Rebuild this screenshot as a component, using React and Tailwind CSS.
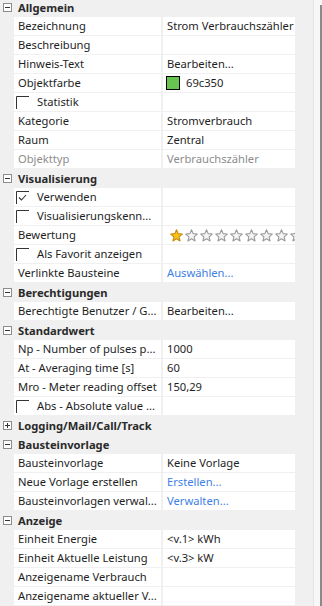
import React from "react";

const font = { fontFamily: '"Noto Sans", "Open Sans", sans-serif' };

const sections = [
  {
    title: "Allgemein",
    open: true,
    rows: [
      { name: "Bezeichnung", value: "Strom Verbrauchszähler" },
      { name: "Beschreibung", value: "" },
      { name: "Hinweis-Text", value: "Bearbeiten..." },
      { name: "Objektfarbe", value: "69c350", swatch: "#69c350" },
      { name: "Statistik", check: false },
      { name: "Kategorie", value: "Stromverbrauch" },
      { name: "Raum", value: "Zentral" },
      { name: "Objekttyp", value: "Verbrauchszähler", muted: true },
    ],
  },
  {
    title: "Visualisierung",
    open: true,
    rows: [
      { name: "Verwenden", check: true },
      { name: "Visualisierungskenn...", check: false },
      { name: "Bewertung", stars: 1 },
      { name: "Als Favorit anzeigen", check: false },
      { name: "Verlinkte Bausteine", value: "Auswählen...", link: true },
    ],
  },
  {
    title: "Berechtigungen",
    open: true,
    rows: [{ name: "Berechtigte Benutzer / G...", value: "Bearbeiten..." }],
  },
  {
    title: "Standardwert",
    open: true,
    rows: [
      { name: "Np - Number of pulses p...", value: "1000" },
      { name: "At - Averaging time [s]", value: "60" },
      { name: "Mro - Meter reading offset", value: "150,29" },
      { name: "Abs - Absolute value ...", check: false },
    ],
  },
  { title: "Logging/Mail/Call/Track", open: false, rows: [] },
  {
    title: "Bausteinvorlage",
    open: true,
    rows: [
      { name: "Bausteinvorlage", value: "Keine Vorlage" },
      { name: "Neue Vorlage erstellen", value: "Erstellen...", link: true },
      { name: "Bausteinvorlagen verwal...", value: "Verwalten...", link: true },
    ],
  },
  {
    title: "Anzeige",
    open: true,
    rows: [
      { name: "Einheit Energie", value: "<v.1> kWh" },
      { name: "Einheit Aktuelle Leistung", value: "<v.3> kW" },
      { name: "Anzeigename Verbrauch", value: "" },
      { name: "Anzeigename aktueller V...", value: "" },
    ],
  },
];

const ToggleBox = ({ open }) => (
  <svg width="9" height="9" viewBox="0 0 9 9" className="shrink-0">
    <rect x="0.5" y="0.5" width="8" height="8" fill="#fff" stroke="#8c8c8c" />
    <line x1="2" y1="4.5" x2="7" y2="4.5" stroke="#333" />
    {!open && <line x1="4.5" y1="2" x2="4.5" y2="7" stroke="#333" />}
  </svg>
);

const CheckBox = ({ checked }) => (
  <svg width="13" height="13" viewBox="0 0 13 13" className="shrink-0">
    <path d="M0.5 13 V0.5 H13" fill="none" stroke="#333" />
    {checked && <path d="M3 6.5 L5.5 9 L10 4" fill="none" stroke="#333" strokeWidth="1.1" />}
  </svg>
);

const Star = ({ filled }) => (
  <svg width="13" height="13" viewBox="0 0 24 24" className="shrink-0">
    <path
      d="M12 1.5 L15 8.6 L22.7 9.3 L16.8 14.4 L18.6 22 L12 18 L5.4 22 L7.2 14.4 L1.3 9.3 L9 8.6 Z"
      fill={filled ? "#f7c21a" : "#f4f4f4"}
      stroke={filled ? "#c98a10" : "#9a9a9a"}
      strokeWidth="2"
      strokeLinejoin="round"
    />
  </svg>
);

const Row = ({ row }) => (
  <div className="flex h-[19px] pb-px">
    <div className="ml-[14px] flex w-[147px] items-center overflow-hidden whitespace-nowrap bg-white">
      {row.check !== undefined ? (
        <>
          <span className="ml-[2px]"><CheckBox checked={row.check} /></span>
          <span className="ml-[8px] text-[#1e1e1e]">{row.name}</span>
        </>
      ) : (
        <span className={`ml-[4px] ${row.muted ? "text-[#8d8d8d]" : "text-[#1e1e1e]"}`}>{row.name}</span>
      )}
    </div>
    <div className="ml-[2px] flex w-[132px] items-center overflow-hidden whitespace-nowrap bg-white">
      {row.stars !== undefined ? (
        <div className="ml-[7px] flex gap-[2px]">
          {Array.from({ length: 10 }).map((_, i) => (
            <Star key={i} filled={i < row.stars} />
          ))}
        </div>
      ) : row.swatch ? (
        <>
          <span className="ml-[3px] h-[14px] w-[14px] border border-black bg-[#69c350]" />
          <span className="ml-[6px] text-[#1e1e1e]">{row.value}</span>
        </>
      ) : (
        <span
          className={`ml-[4px] ${
            row.link ? "text-[#3d7fe6]" : row.muted ? "text-[#8d8d8d]" : "text-[#1e1e1e]"
          }`}
        >
          {row.value}
        </span>
      )}
    </div>
  </div>
);

export default function App() {
  return (
    <div className="flex h-[606px] w-[322px] overflow-hidden bg-[#f0f0f0] text-[11.2px] leading-none" style={font}>
      <div className="-mt-[2px] w-[313px]">
        {sections.map((s) => (
          <div key={s.title}>
            <div className="flex h-[19px] items-center">
              <span className="ml-[3px]"><ToggleBox open={s.open} /></span>
              <span className="ml-[6px] font-bold text-[#2a2a2a]">{s.title}</span>
            </div>
            {s.rows.map((r) => (
              <Row key={r.name} row={r} />
            ))}
          </div>
        ))}
      </div>
      <div className="flex w-[9px] justify-end border-l border-[#e4e4e4] bg-[#f7f7f7] pt-[5px]">
        <div className="h-full w-[2px] bg-[#8a8a8a]" />
      </div>
    </div>
  );
}
